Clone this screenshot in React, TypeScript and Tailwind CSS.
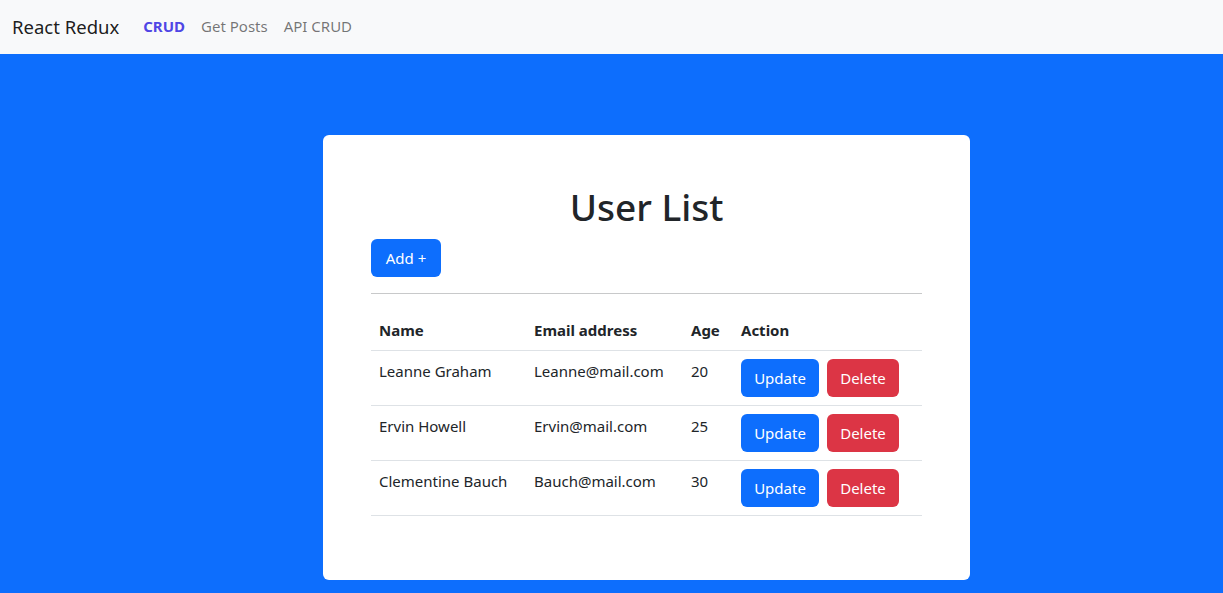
const users = [
  { name: "Leanne Graham", email: "Leanne@mail.com", age: 20 },
  { name: "Ervin Howell", email: "Ervin@mail.com", age: 25 },
  { name: "Clementine Bauch", email: "Bauch@mail.com", age: 30 },
];

export default function App() {
  return (
    <div
      className="min-h-screen bg-[#0d6efd] text-[#212529]"
      style={{ fontFamily: '"Noto Sans", "Open Sans", sans-serif' }}
    >
      <nav className="h-[54px] bg-[#f8f9fa] flex items-center px-3 pb-[1px]">
        <span className="text-[18.5px] text-black/90 mr-[24px]">React Redux</span>
        <div className="flex items-center gap-[16px] text-[15px]">
          <a className="font-bold text-[#4f46e5]">CRUD</a>
          <a className="text-black/55">Get Posts</a>
          <a className="text-black/55">API CRUD</a>
        </div>
      </nav>

      <div className="pt-[81px] pb-[13px]">
        <div className="ml-[323px] w-[647px] bg-white rounded-[6px] p-[48px]">
          <h1 className="text-[37px] font-medium leading-[48px] text-center mb-[8px]">
            User List
          </h1>
          <button className="h-[38px] w-[70px] rounded-[6px] bg-[#0d6efd] text-white text-[15px]">
            Add +
          </button>
          <hr className="my-[16px] border-0 border-t border-[#c8c9ca]" />
          <table className="w-full text-[15px] border-collapse mb-[16px]">
            <thead>
              <tr className="border-b border-[#dee2e6]">
                <th className="w-[155px] p-[8px] text-left font-bold leading-[24px]">Name</th>
                <th className="w-[157px] p-[8px] text-left font-bold leading-[24px]">Email address</th>
                <th className="w-[50px] p-[8px] text-left font-bold leading-[24px]">Age</th>
                <th className="p-[8px] text-left font-bold leading-[24px]">Action</th>
              </tr>
            </thead>
            <tbody>
              {users.map((u) => (
                <tr key={u.email} className="border-b border-[#dee2e6]">
                  <td className="p-[8px] align-top leading-[24px]">{u.name}</td>
                  <td className="p-[8px] align-top leading-[24px]">{u.email}</td>
                  <td className="p-[8px] align-top leading-[24px]">{u.age}</td>
                  <td className="p-[8px] align-top">
                    <div className="flex gap-[8px]">
                      <button className="h-[38px] w-[78px] rounded-[6px] bg-[#0d6efd] text-white text-[15px]">
                        Update
                      </button>
                      <button className="h-[38px] w-[72px] rounded-[6px] bg-[#dc3545] text-white text-[15px]">
                        Delete
                      </button>
                    </div>
                  </td>
                </tr>
              ))}
            </tbody>
          </table>
        </div>
      </div>
    </div>
  );
}
